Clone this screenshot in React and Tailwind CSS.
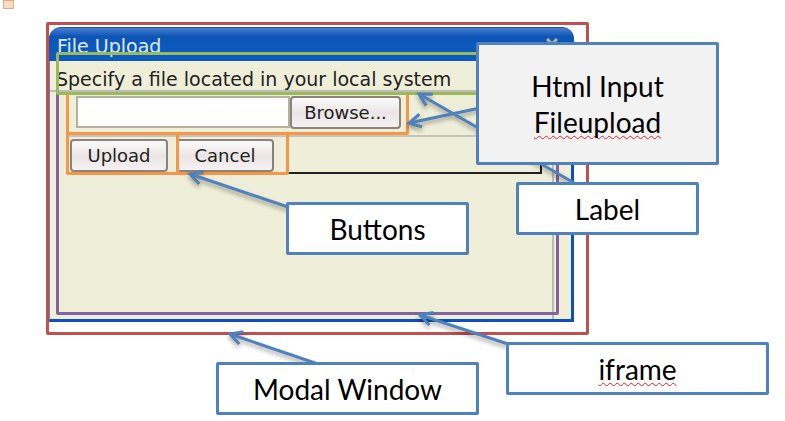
const arrows = [
  { from: [480, 108], tip: [409, 123] },
  { from: [576, 184], tip: [419, 94] },
  { from: [288, 207], tip: [190, 174] },
  { from: [318, 364], tip: [230, 334] },
  { from: [508, 344], tip: [420, 315] },
];

const dialogButton =
  "rounded border-2 border-[#8b827b] bg-linear-to-b from-[#fbfafa] via-[#ebe6e5] to-[#f4f1f0] text-center";

function Modal() {
  return (
    <section
      aria-labelledby="modal-title"
      className="flex w-[525px] flex-col font-['DejaVu_Sans',sans-serif] text-lg text-[#222]"
    >
      <header className="flex h-[34px] items-start justify-between rounded-t-xl border-t border-[#1d55a5] bg-linear-to-b from-[#4380d2] via-[#0d55b5] via-25% to-[#0a5cc4] px-2 pt-1.5">
        <h1 id="modal-title" className="text-[19px] leading-6 text-[#e0ecfb]">
          File Upload
        </h1>
        <button type="button" aria-label="Close" className="mt-1 mr-2">
          <svg width="12" height="12" viewBox="0 0 12 12" stroke="#b7b3a6" strokeWidth="3">
            <path d="M1 1L11 11M11 1L1 11" />
          </svg>
        </button>
      </header>
      <div className="flex h-[261px] flex-col border-r-3 border-b-3 border-l border-[#0d4fc0] border-l-[#5b86c4] bg-[#efefd9] pr-[17px]">
        <div className="flex flex-1 flex-col border-r-2 border-[#bdbdb8]">
          <form className="flex flex-col" onSubmit={(event) => event.preventDefault()}>
            <label
              htmlFor="file-path"
              className="h-[31px] border-b-2 border-[#bdbdb8] pt-1 pl-1.5 text-[19px] leading-7 whitespace-nowrap"
            >
              Specify a file located in your local system
            </label>
            <div className="mr-2.5 ml-4 flex h-[45px] items-start border-b-2 border-[#c4c4bc] pt-1 pl-[10px]">
              <input
                id="file-path"
                type="text"
                className="h-8 w-[214px] border-2 border-[#b5b1a2] bg-white px-2"
              />
              <button type="button" className={`${dialogButton} h-[33px] w-[111px] leading-7`}>
                Browse...
              </button>
            </div>
            <div className="mr-2.5 ml-4 flex h-[37px] items-start gap-2 border-r-2 border-b-2 border-[#222] pt-0.5 pl-1">
              <button type="submit" className={`${dialogButton} h-[33px] w-[98px] leading-7`}>
                Upload
              </button>
              <button type="button" className={`${dialogButton} h-[33px] w-[98px] leading-7`}>
                Cancel
              </button>
            </div>
          </form>
        </div>
      </div>
    </section>
  );
}

function Frame({ className }) {
  return <div aria-hidden="true" className={`pointer-events-none absolute rounded-xs border-3 ${className}`} />;
}

function Arrow({ from, tip }) {
  const angle = (Math.atan2(tip[1] - from[1], tip[0] - from[0]) * 180) / Math.PI;
  return (
    <g>
      <line x1={from[0]} y1={from[1]} x2={tip[0]} y2={tip[1]} />
      <path d="M-12 -6.5L0 0L-12 6.5" transform={`translate(${tip[0]} ${tip[1]}) rotate(${angle})`} />
    </g>
  );
}

function Callout({ className, children }) {
  return (
    <div
      className={`absolute flex items-center justify-center rounded-xs border-3 border-[#4f81bd] text-center font-['Lato',sans-serif] text-[28px] leading-9 text-black ${className}`}
    >
      <p>{children}</p>
    </div>
  );
}

function Misspelled({ children }) {
  return (
    <span className="underline decoration-[#e02020] decoration-wavy decoration-1 underline-offset-2 [text-decoration-skip-ink:none]">
      {children}
    </span>
  );
}

export default function App() {
  return (
    <main className="relative min-h-screen overflow-hidden bg-white pt-[27px] pb-24 pl-[49px]">
      <div className="absolute top-0 left-[3px] h-[9px] w-[11px] border border-[#e6ab80] bg-[#f9dcc6]" />
      <Modal />

      <Frame className="top-[22px] left-[46px] h-[313px] w-[543px] border-[#c0504d]" />
      <Frame className="top-[92px] left-[56px] h-[223px] w-[503px] border-[#8064a2]" />
      <Frame className="top-[92px] left-[66px] h-[43px] w-[343px] border-[#f79646]" />
      <Frame className="top-[132px] left-[66px] h-[43px] w-[113px] border-[#f79646]" />
      <Frame className="top-[132px] left-[176px] h-[43px] w-[113px] border-[#f79646]" />
      <Frame className="top-[52px] left-[56px] h-[43px] w-[473px] border-[#9bbb59]" />

      <svg
        aria-hidden="true"
        width="785"
        height="421"
        viewBox="0 0 785 421"
        fill="none"
        stroke="#4f81bd"
        strokeWidth="3"
        className="pointer-events-none absolute top-0 left-0 drop-shadow-[0_3px_2px_rgba(0,0,0,0.35)]"
      >
        {arrows.map((arrow) => (
          <Arrow key={arrow.tip.join()} {...arrow} />
        ))}
      </svg>

      <Callout className="top-[42px] left-[476px] h-[123px] w-[243px] bg-[#f2f2f2]">
        Html Input
        <br />
        <Misspelled>Fileupload</Misspelled>
      </Callout>
      <Callout className="top-[182px] left-[516px] h-[53px] w-[183px] bg-white">Label</Callout>
      <Callout className="top-[202px] left-[286px] h-[53px] w-[183px] bg-white">Buttons</Callout>
      <Callout className="top-[362px] left-[216px] h-[53px] w-[263px] bg-white">Modal Window</Callout>
      <Callout className="top-[342px] left-[506px] h-[53px] w-[263px] bg-white">
        <Misspelled>iframe</Misspelled>
      </Callout>
    </main>
  );
}
